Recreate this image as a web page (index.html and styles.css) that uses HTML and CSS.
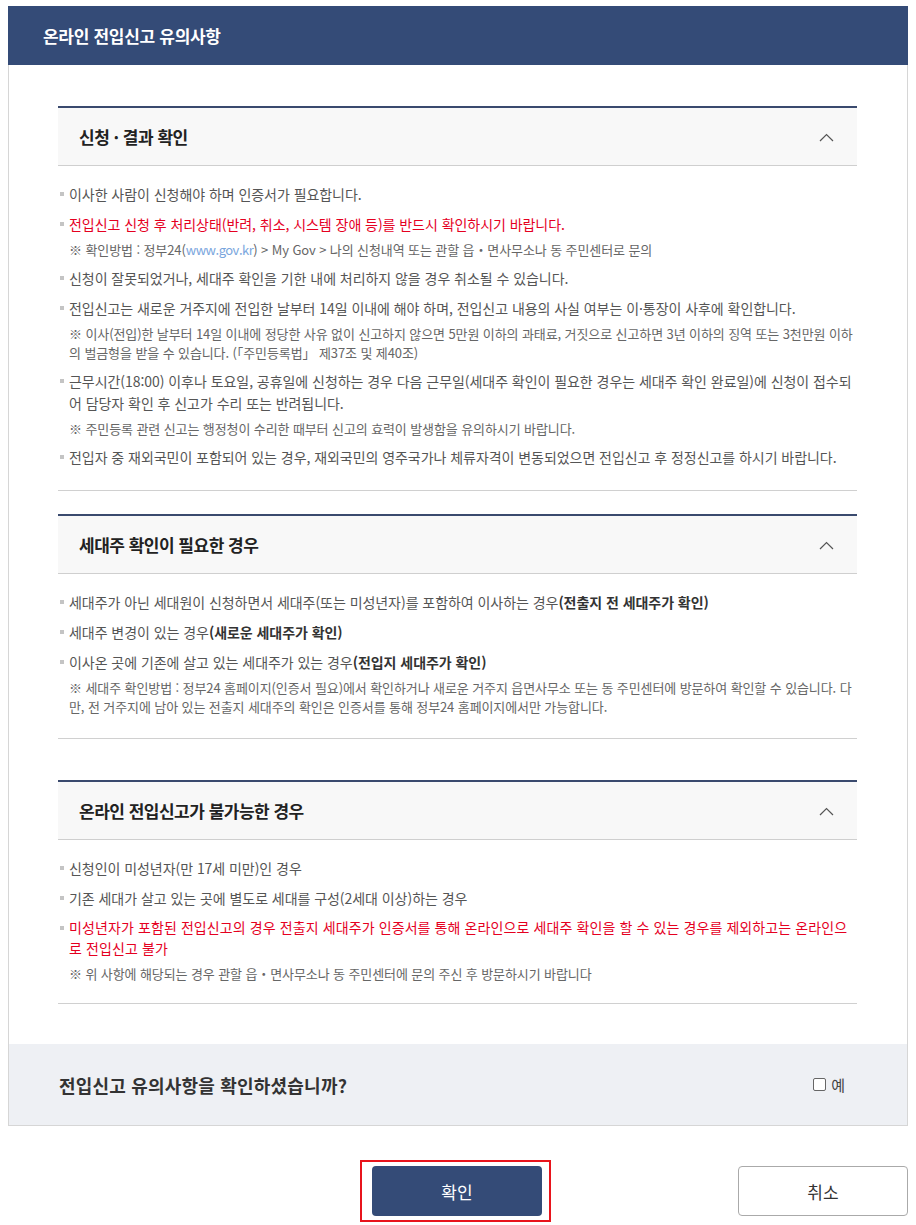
FILE: index.html
```html
<!DOCTYPE html>
<html lang="ko">
<head>
<meta charset="utf-8">
<title>온라인 전입신고 유의사항</title>
<link rel="stylesheet" href="styles.css">
</head>
<body>
<div class="page">
  <div class="topbar"><h1>온라인 전입신고 유의사항</h1></div>
  <div class="panel">
    <div class="sections">
      <section class="acc acc-1">
        <div class="acc-head">
          <h2>신청 · 결과 확인</h2>
          <svg class="chev" width="15" height="9" viewBox="0 0 15 9"><path d="M1 8 L7.5 1.5 L14 8" fill="none" stroke="#555" stroke-width="1.2"/></svg>
        </div>
        <ul class="acc-body">
          <li>이사한 사람이 신청해야 하며 인증서가 필요합니다.</li>
          <li class="red">전입신고 신청 후 처리상태(반려, 취소, 시스템 장애 등)를 반드시 확인하시기 바랍니다.
            <p class="note">※ 확인방법 : 정부24(<span class="link">www.gov.kr</span>) &gt; My Gov &gt; 나의 신청내역 또는 관할 읍・면사무소나 동 주민센터로 문의</p>
          </li>
          <li>신청이 잘못되었거나, 세대주 확인을 기한 내에 처리하지 않을 경우 취소될 수 있습니다.</li>
          <li>전입신고는 새로운 거주지에 전입한 날부터 14일 이내에 해야 하며, 전입신고 내용의 사실 여부는 이·통장이 사후에 확인합니다.
            <p class="note">※ 이사(전입)한 날부터 14일 이내에 정당한 사유 없이 신고하지 않으면 5만원 이하의 과태료, 거짓으로 신고하면 3년 이하의 징역 또는 3천만원 이하의 벌금형을 받을 수 있습니다. (「주민등록법」 제37조 및 제40조)</p>
          </li>
          <li>근무시간(18:00) 이후나 토요일, 공휴일에 신청하는 경우 다음 근무일(세대주 확인이 필요한 경우는 세대주 확인 완료일)에 신청이 접수되어 담당자 확인 후 신고가 수리 또는 반려됩니다.
            <p class="note">※ 주민등록 관련 신고는 행정청이 수리한 때부터 신고의 효력이 발생함을 유의하시기 바랍니다.</p>
          </li>
          <li>전입자 중 재외국민이 포함되어 있는 경우, 재외국민의 영주국가나 체류자격이 변동되었으면 전입신고 후 정정신고를 하시기 바랍니다.</li>
        </ul>
      </section>

      <section class="acc acc-2">
        <div class="acc-head">
          <h2>세대주 확인이 필요한 경우</h2>
          <svg class="chev" width="15" height="9" viewBox="0 0 15 9"><path d="M1 8 L7.5 1.5 L14 8" fill="none" stroke="#555" stroke-width="1.2"/></svg>
        </div>
        <ul class="acc-body">
          <li>세대주가 아닌 세대원이 신청하면서 세대주(또는 미성년자)를 포함하여 이사하는 경우<b>(전출지 전 세대주가 확인)</b></li>
          <li>세대주 변경이 있는 경우<b>(새로운 세대주가 확인)</b></li>
          <li>이사온 곳에 기존에 살고 있는 세대주가 있는 경우<b>(전입지 세대주가 확인)</b>
            <p class="note">※ 세대주 확인방법 : 정부24 홈페이지(인증서 필요)에서 확인하거나 새로운 거주지 읍면사무소 또는 동 주민센터에 방문하여 확인할 수 있습니다. 다만, 전 거주지에 남아 있는 전출지 세대주의 확인은 인증서를 통해 정부24 홈페이지에서만 가능합니다.</p>
          </li>
        </ul>
      </section>

      <section class="acc acc-3">
        <div class="acc-head">
          <h2>온라인 전입신고가 불가능한 경우</h2>
          <svg class="chev" width="15" height="9" viewBox="0 0 15 9"><path d="M1 8 L7.5 1.5 L14 8" fill="none" stroke="#555" stroke-width="1.2"/></svg>
        </div>
        <ul class="acc-body">
          <li>신청인이 미성년자(만 17세 미만)인 경우</li>
          <li>기존 세대가 살고 있는 곳에 별도로 세대를 구성(2세대 이상)하는 경우</li>
          <li class="red wide">미성년자가 포함된 전입신고의 경우 전출지 세대주가 인증서를 통해 온라인으로 세대주 확인을 할 수 있는 경우를 제외하고는 온라인으로 전입신고 불가
            <p class="note">※ 위 사항에 해당되는 경우 관할 읍・면사무소나 동 주민센터에 문의 주신 후 방문하시기 바랍니다</p>
          </li>
        </ul>
      </section>
    </div>

    <div class="confirm">
      <p class="question">전입신고 유의사항을 확인하셨습니까?</p>
      <label class="yes"><input type="checkbox" class="chk"><span>예</span></label>
    </div>
  </div>

  <div class="actions">
    <span class="focus-ring"><button class="btn btn-primary" type="button">확인</button></span>
    <button class="btn btn-cancel" type="button">취소</button>
  </div>
</div>
</body>
</html>
```
FILE: styles.css
```css
* { box-sizing: border-box; }
html, body { margin: 0; padding: 0; background: #fff; }
body {
  font-family: "Noto Sans CJK KR", "Noto Sans", sans-serif;
  color: #555;
}
.page {
  padding: 6px 8px 0 8px;
  width: 916px;
}
.topbar {
  background: #344b77;
  height: 59px;
  display: flex;
  align-items: center;
  padding-left: 35px;
}
.topbar h1 {
  margin: 0;
  color: #fff;
  font-size: 17px;
  font-weight: 700;
  letter-spacing: -0.3px;
}
.panel {
  border: 1px solid #d6d6d6;
  border-top: none;
  width: 900px;
}
.sections {
  padding: 41px 50px 40px 49px;
}
.acc-2 { margin-top: 23px; }
.acc-3 { margin-top: 41px; }
.acc-head {
  border-top: 2px solid #3a4a6e;
  border-bottom: 1px solid #cfcfcf;
  background: #f8f8f8;
  height: 60px;
  display: flex;
  align-items: center;
  justify-content: space-between;
  padding: 0 23px 0 21px;
}
.acc-head h2 {
  margin: 0;
  font-size: 17px;
  font-weight: 700;
  color: #222;
  letter-spacing: -0.5px;
}
.chev { display: block; margin-top: 1px; }
.acc-body {
  list-style: none;
  margin: 0;
  padding: 17px 0 22px 0;
  border-bottom: 1px solid #d0d0d0;
}
.acc-3 .acc-body { padding-bottom: 20px; }
.acc-body li {
  position: relative;
  padding-left: 11px;
  font-size: 14px;
  line-height: 22px;
  color: #555;
  margin-top: 8px;
  letter-spacing: -0.05px;
}
.acc-body li.wide { letter-spacing: 0.1px; line-height: 21px; }
.acc-body li:first-child { margin-top: 0; }
.acc-body li::before {
  content: "";
  position: absolute;
  left: 2px;
  top: 9px;
  width: 4px;
  height: 4px;
  background: #c4c4c4;
}
.acc-body li.red { color: #e5001f; }
.acc-body li b { color: #333; font-weight: 700; }
.note {
  margin: 5px 0 0 0;
  font-size: 13px;
  line-height: 19px;
  color: #666;
  letter-spacing: -0.1px;
}
.link { color: #7aa6dd; letter-spacing: -0.5px; }
.confirm {
  background: #eef0f4;
  height: 81px;
  display: flex;
  align-items: center;
  justify-content: space-between;
  padding: 0 62px 0 50px;
}
.question {
  margin: 0;
  font-size: 18px;
  font-weight: 700;
  color: #333;
  letter-spacing: 0.2px;
}
.yes {
  display: flex;
  align-items: center;
  gap: 5px;
  font-size: 15px;
  color: #444;
}
.chk {
  appearance: none;
  -webkit-appearance: none;
  margin: 0;
  width: 13px;
  height: 13px;
  border: 1px solid #666;
  border-radius: 2px;
  background: #fff;
}
.actions {
  display: grid;
  grid-template-columns: 352px auto 1fr;
  align-items: center;
  margin-top: 34px;
  width: 900px;
}
.focus-ring {
  grid-column: 2;
  display: block;
  border: 2px solid #e8141c;
  padding: 4px 7px 4px 10px;
}
.btn {
  font-family: "Noto Sans CJK KR", "Noto Sans", sans-serif;
  font-size: 17px;
  width: 170px;
  height: 50px;
  border-radius: 4px;
  cursor: pointer;
  display: block;
}
.btn-primary {
  background: #344b77;
  color: #fff;
  border: none;
}
.btn-cancel {
  grid-column: 3;
  justify-self: end;
  background: #fff;
  color: #333;
  border: 1px solid #aaa;
  width: 170px;
}
```
